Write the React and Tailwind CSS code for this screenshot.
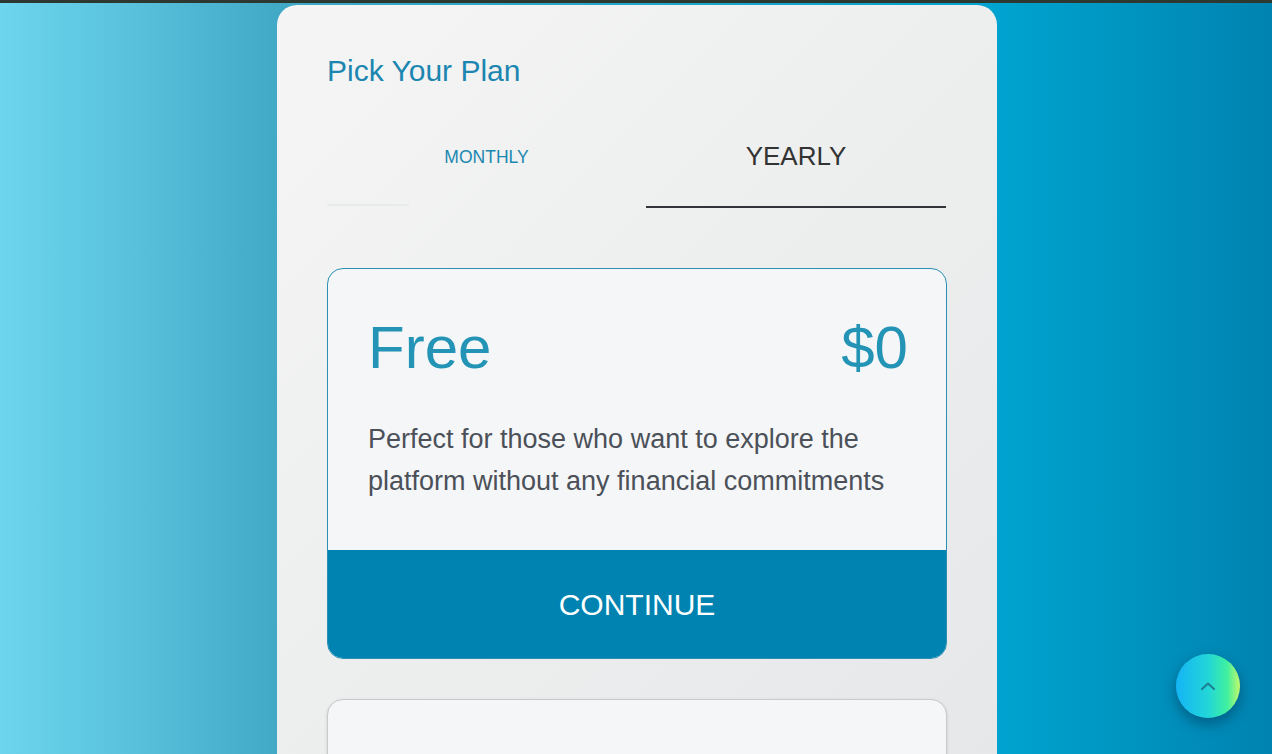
import React, { useState } from "react"

const plans = [
  {
    name: "Free",
    price: "$0",
    description: "Perfect for those who want to explore the platform without any financial commitments",
  },
  {
    name: "Pro",
    price: "$99",
    description: "Everything you need to grow, with advanced tools and priority support for your team",
  },
]

const PlanCard = ({ plan, active }) => (
  <div
    className={`rounded-[16px] overflow-hidden border bg-[#f5f6f7] ${
      active ? "border-[#2a8fb3]" : "border-[#c9cacc] shadow-[0_1px_3px_rgba(0,0,0,0.15)]"
    }`}
  >
    <div className="pl-[40px] pr-[38px] pt-[49px] pb-[48px]">
      <div className="flex items-start justify-between text-[60px] leading-none text-[#2394b5]">
        <span>{plan.name}</span>
        <span>{plan.price}</span>
      </div>
      <p className="mt-[40px] text-[27px] leading-[42px] text-[#4b5059]">{plan.description}</p>
    </div>
    <button className="w-full h-[108px] bg-[#0083b0] text-white text-[30px] uppercase">Continue</button>
  </div>
)

const App = () => {
  const [billing, setBilling] = useState("yearly")

  return (
    <div
      className="min-h-screen border-t-[3px] border-[#2d3830] bg-[linear-gradient(to_right,#6dd6ee_0%,#41a9c6_22%,#00a4d0_78%,#0083b0_100%)]"
      style={{ fontFamily: '"Liberation Sans", Arial, sans-serif' }}
    >
      <div className="flex justify-center pt-[2px] pl-[2px]">
        <div className="w-[720px] rounded-t-[20px] bg-[linear-gradient(135deg,#f5f5f5_0%,#eceded_45%,#e3e4e7_100%)] px-[50px] pt-[50px] pb-[60px]">
          <h1 className="text-[30px] leading-[32px] text-[#1c86b1]">Pick Your Plan</h1>

          {/* Tabs */}
          <div className="mt-[20px] grid grid-cols-[319px_300px]">
            <button
              onClick={() => setBilling("monthly")}
              className="relative h-[101px] flex items-center justify-center text-[17.5px] uppercase text-[#1a88b0]"
            >
              Monthly
              <span className="absolute left-0 bottom-[2px] h-[2px] w-[82px] bg-[#e9eaea]" />
            </button>
            <button
              onClick={() => setBilling("yearly")}
              className="h-[101px] flex items-center justify-center text-[26px] uppercase text-[#333333] border-b-2 border-[#33343a]"
            >
              Yearly
            </button>
          </div>

          {/* Plans */}
          <div className="mt-[60px] flex flex-col gap-[40px]">
            {plans.map((plan, i) => (
              <PlanCard key={plan.name} plan={plan} active={i === 0} />
            ))}
          </div>
        </div>
      </div>

      {/* Back to top */}
      <button className="fixed right-[32px] bottom-[36px] w-[64px] h-[64px] rounded-full bg-[linear-gradient(to_right,#14b4f5_0%,#22d6d8_50%,#3ff0a0_80%,#c4f86a_100%)] shadow-[0_6px_14px_rgba(0,40,70,0.45)] flex items-center justify-center">
        <svg width="16" height="10" viewBox="0 0 16 10" fill="none">
          <path d="M2 8 L8 2.5 L14 8" stroke="#1b7f93" strokeWidth="2" strokeLinecap="round" strokeLinejoin="round" />
        </svg>
      </button>
    </div>
  )
}

export default App
